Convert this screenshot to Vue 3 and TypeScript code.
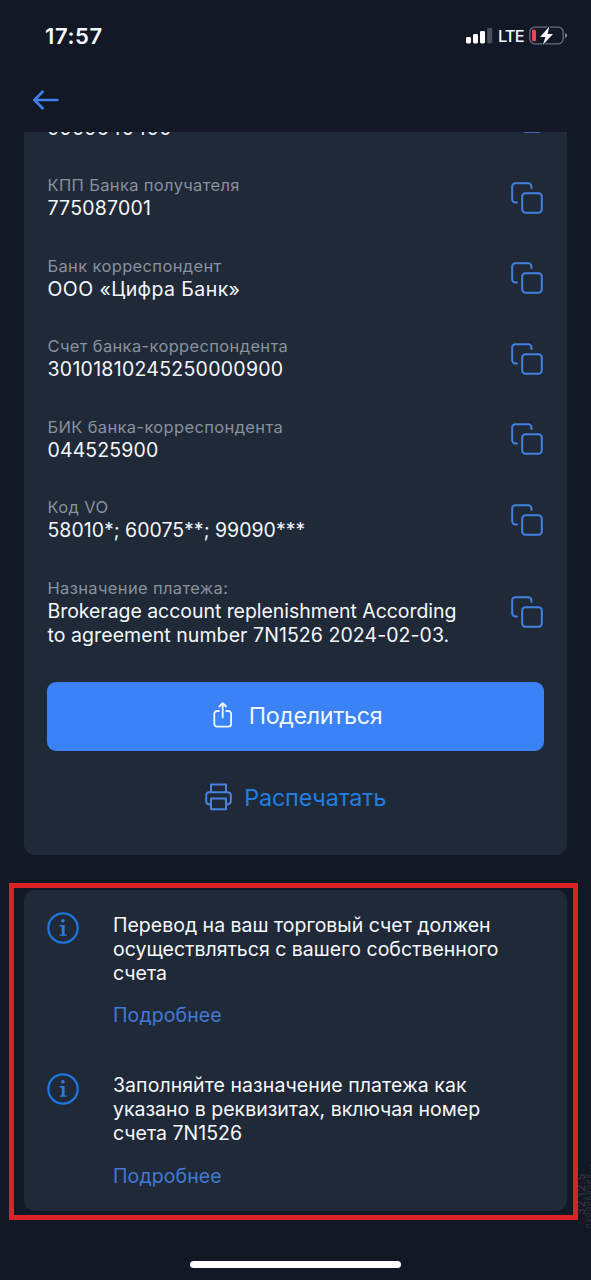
<script setup lang="ts">
interface Requisite {
  label: string
  lines: string[]
  tone?: string
}

interface Notice {
  lines: string[]
}

const requisites: Requisite[] = [
  { label: '', lines: ['9909540490'], tone: 'inn' },
  { label: 'КПП Банка получателя', lines: ['775087001'], tone: 'kpp' },
  { label: 'Банк корреспондент', lines: ['ООО «Цифра Банк»'], tone: 'bank' },
  { label: 'Счет банка-корреспондента', lines: ['30101810245250000900'], tone: 'account' },
  { label: 'БИК банка-корреспондента', lines: ['044525900'], tone: 'bik' },
  { label: 'Код VO', lines: ['58010*; 60075**; 99090***'], tone: 'vo' },
  {
    label: 'Назначение платежа:',
    lines: ['Brokerage account replenishment According', 'to agreement number 7N1526 2024-02-03.'],
    tone: 'purpose',
  },
]

const notices: Notice[] = [
  { lines: ['Перевод на ваш торговый счет должен', 'осуществляться с вашего собственного', 'счета'] },
  { lines: ['Заполняйте назначение платежа как', 'указано в реквизитах, включая номер', 'счета 7N1526'] },
]
</script>

<template>
  <div class="screen">
    <header class="status">
      <span class="time">17:57</span>
      <div class="indicators">
        <svg class="signal" width="27" height="17" viewBox="0 0 27 17">
          <rect x="0" y="9" width="5" height="6.5" rx="1.4" fill="#fff" />
          <rect x="7" y="6" width="5" height="9.5" rx="1.4" fill="#fff" />
          <rect x="14" y="3" width="5" height="12.5" rx="1.4" fill="#fff" />
          <rect x="21.2" y="0" width="5" height="15.5" rx="1.4" fill="#4a4f5c" />
        </svg>
        <span class="lte">LTE</span>
        <svg class="battery" width="39" height="20" viewBox="0 0 39 20">
          <rect x="0.8" y="1.2" width="33.4" height="16.6" rx="5" fill="none" stroke="#6d7280" stroke-width="1.3" />
          <path d="M36 7q2.2.8 2.2 2.6T36 12.2z" fill="#7b808c" />
          <rect x="3" y="3.5" width="4" height="12" rx="1.7" fill="#e5484d" />
          <path d="M20.3 0.400 11.1 10.900h5.3L13.8 19.000l10.2-11.100h-5.4z" fill="#fff" stroke="#121826" stroke-width="2" paint-order="stroke" />
        </svg>
      </div>
    </header>

    <nav class="nav">
      <svg width="28" height="22" viewBox="0 0 28 22" fill="none" stroke="#3d7fec" stroke-width="2.7" stroke-linecap="round" stroke-linejoin="round">
        <path d="M25.4 11H2.4M10.6 2.7 2.4 11l8.2 8.3" />
      </svg>
    </nav>

    <main class="card details">
      <ul class="rows">
        <li v-for="row in requisites" :key="row.lines[0]" class="row" :class="row.tone">
          <div class="info">
            <div class="label">{{ row.label }}</div>
            <div v-for="line in row.lines" :key="line" class="value">{{ line }}</div>
          </div>
          <svg class="copy" width="32" height="32" viewBox="0 0 32 32" fill="none" stroke="#4280e2" stroke-width="2" stroke-linecap="round" stroke-linejoin="round">
            <rect x="11.2" y="11.2" width="19.6" height="19.6" rx="3.2" />
            <path d="M6 20.4H4.4A3.2 3.2 0 0 1 1.2 17.200V4.400A3.2 3.2 0 0 1 4.400 1.200H17.200A3.2 3.2 0 0 1 20.400 4.400V6" />
          </svg>
        </li>
      </ul>
      <button class="share" type="button">
        <svg width="20" height="28" viewBox="0 0 20 28" fill="none" stroke="#f0f8ff" stroke-width="1.8" stroke-linecap="round" stroke-linejoin="round">
          <path d="M6 10H4a2.700 2.700 0 0 0-2.700 2.700V23A2.700 2.700 0 0 0 4 25.700H15.400A2.700 2.700 0 0 0 18.100 23V12.700A2.700 2.700 0 0 0 15.400 10H13.300M9.700 16.500V2.400M6.300 5.500 9.700 2.100 13.100 5.500" />
        </svg>
        <span>Поделиться</span>
      </button>
      <button class="print" type="button">
        <svg width="27" height="28" viewBox="0 0 27 28" fill="none" stroke="#4b82dd" stroke-width="2" stroke-linejoin="round">
          <path d="M6 9.200V1.500H21V9.200M6 21.200H4.200A3.000 3.000 0 0 1 1.200 18.200V12.200A3.000 3.000 0 0 1 4.200 9.200H22.800A3.000 3.000 0 0 1 25.800 12.200V18.200A3.000 3.000 0 0 1 22.800 21.200H21M6 15.600H21V26.200H6z" />
        </svg>
        <span>Распечатать</span>
      </button>
    </main>

    <section class="frame">
      <div class="card notices">
        <article v-for="(notice, i) in notices" :key="i" class="notice" :class="'notice-' + i">
          <svg class="badge" width="32" height="32" viewBox="0 0 32 32">
            <circle cx="16" cy="16" r="14.700" fill="none" stroke="#1e76df" stroke-width="2.200" />
            <circle cx="15.900" cy="8.800" r="1.800" fill="#2d7ce0" />
            <path d="M12.600 13.100h5v9.400h2v1.300h-7v-1.300h2.200v-8.100h-2.200z" fill="#2d7ce0" />
          </svg>
          <div class="body">
            <p class="text"><span v-for="line in notice.lines" :key="line">{{ line }}</span></p>
            <a class="more">Подробнее</a>
          </div>
        </article>
      </div>
    </section>

    <div class="home"></div>
    <div class="stamp"><span>32.12.5</span><span class="faint">публикация...</span></div>
  </div>
</template>

<style>
body {
  background: #121826;
}
</style>

<style scoped>
.screen {
  position: relative;
  width: 591px;
  height: 1280px;
  overflow: hidden;
  display: flex;
  flex-direction: column;
  background: #121826;
  color: #f5f8fc;
  font-family: Inter, "Liberation Sans", sans-serif;
  box-sizing: border-box;
}
.status {
  height: 72px;
  flex: none;
  display: flex;
  justify-content: space-between;
  align-items: center;
  padding: 0 24px 0 45px;
}
.time {
  font-size: 22px;
  font-weight: 600;
  letter-spacing: 0.6px;
}
.indicators {
  display: flex;
  align-items: center;
}
.indicators svg {
  flex: none;
}
.battery {
  margin-right: -1px;
}
.lte {
  width: 26px;
  font-size: 16.5px;
  font-weight: 450;
  letter-spacing: -0.9px;
  margin: 0 5px 0 5px;
}
.nav {
  height: 59.5px;
  flex: none;
  padding: 17px 0 0 32px;
  box-sizing: border-box;
}
.nav svg,
.copy,
.badge {
  display: block;
  flex: none;
}
.card {
  background: #202937;
  box-sizing: border-box;
}
.details {
  flex: none;
  width: 542.5px;
  height: 723.5px;
  margin-left: 24px;
  padding: 0 22.5px 0 23px;
  overflow: hidden;
  border-radius: 0 0 11px 11px;
}
.rows {
  list-style: none;
  margin: -36.9px 1.5px 0 0.5px;
  padding: 0;
  display: flex;
  flex-direction: column;
  gap: 35.5px;
}
.row {
  display: flex;
  align-items: center;
  justify-content: space-between;
}
.label {
  height: 21px;
  line-height: 21px;
  font-size: 16.5px;
  letter-spacing: 0.35px;
  color: #89919e;
  white-space: nowrap;
}
.value {
  height: 24px;
  line-height: 24px;
  font-size: 19.5px;
  white-space: nowrap;
}
.inn .value {
  letter-spacing: 0.2px;
}
.kpp .value {
  letter-spacing: 0.2px;
}
.bank .value {
  letter-spacing: 0.42px;
}
.account .value {
  letter-spacing: 0.27px;
}
.bik .value {
  letter-spacing: 0.12px;
}
.purpose .value {
  letter-spacing: -0.05px;
}
.purpose .value:last-child {
  letter-spacing: 0.07px;
}
.share,
.print {
  display: flex;
  align-items: center;
  justify-content: center;
  width: 497px;
  border: 0;
  padding: 0;
  font-family: inherit;
  font-size: 23.3px;
}
.share {
  height: 69px;
  margin-top: 35.2px;
  gap: 16px;
  border-radius: 9px;
  background: #3b82f6;
  color: #f0f8ff;
  letter-spacing: -0.35px;
  padding: 0 0 2px 4px;
  box-sizing: border-box;
}
.print {
  height: 40px;
  margin-top: 26.5px;
  gap: 12.5px;
  background: none;
  color: #1f7fe5;
  letter-spacing: -0.12px;
}
.frame {
  flex: none;
  width: 569px;
  height: 337px;
  margin: 28px 0 0 9px;
  border: 5px solid #dc2229;
  box-sizing: border-box;
  padding: 2px 6.500px 4px 10px;
}
.notices {
  height: 321px;
  border-radius: 11px;
  padding: 23px 0 0 23px;
  display: flex;
  flex-direction: column;
  gap: 45px;
}
.notice {
  height: 115px;
  display: flex;
  gap: 34px;
}
.badge {
  margin-top: -0.6px;
}
.text {
  margin: 0;
  font-size: 19.5px;
  line-height: 24px;
}
.notice-1 .text span:first-child {
  letter-spacing: 0.06px;
}
.text span {
  display: block;
  white-space: nowrap;
}
.more {
  display: block;
  margin-top: 18px;
  font-size: 19.5px;
  line-height: 24px;
  letter-spacing: 0.1px;
  color: #4279d4;
}
.notice-1 .more {
  margin-top: 19px;
}
.notice-1 .badge {
  margin-top: 0;
}
.home {
  width: 211px;
  height: 7px;
  flex: none;
  margin: 41px 0 0 190px;
  border-radius: 4px;
  background: #fff;
}
.stamp {
  position: absolute;
  left: 577px;
  top: 1158px;
  width: 14px;
  height: 74px;
  transform: rotate(180deg);
  display: flex;
  flex-direction: row-reverse;
  line-height: 8px;
  color: #343b49;
}
.stamp span {
  width: 8px;
  flex: none;
  writing-mode: vertical-rl;
  font-size: 11px;
  letter-spacing: 0.8px;
  line-height: 8px;
  padding-top: 17px;
  box-sizing: border-box;
  white-space: nowrap;
}
.stamp .faint {
  width: 6px;
  padding-top: 4px;
  font-size: 8px;
  letter-spacing: 0.9px;
  line-height: 6px;
  color: #2b3240;
}
</style>
